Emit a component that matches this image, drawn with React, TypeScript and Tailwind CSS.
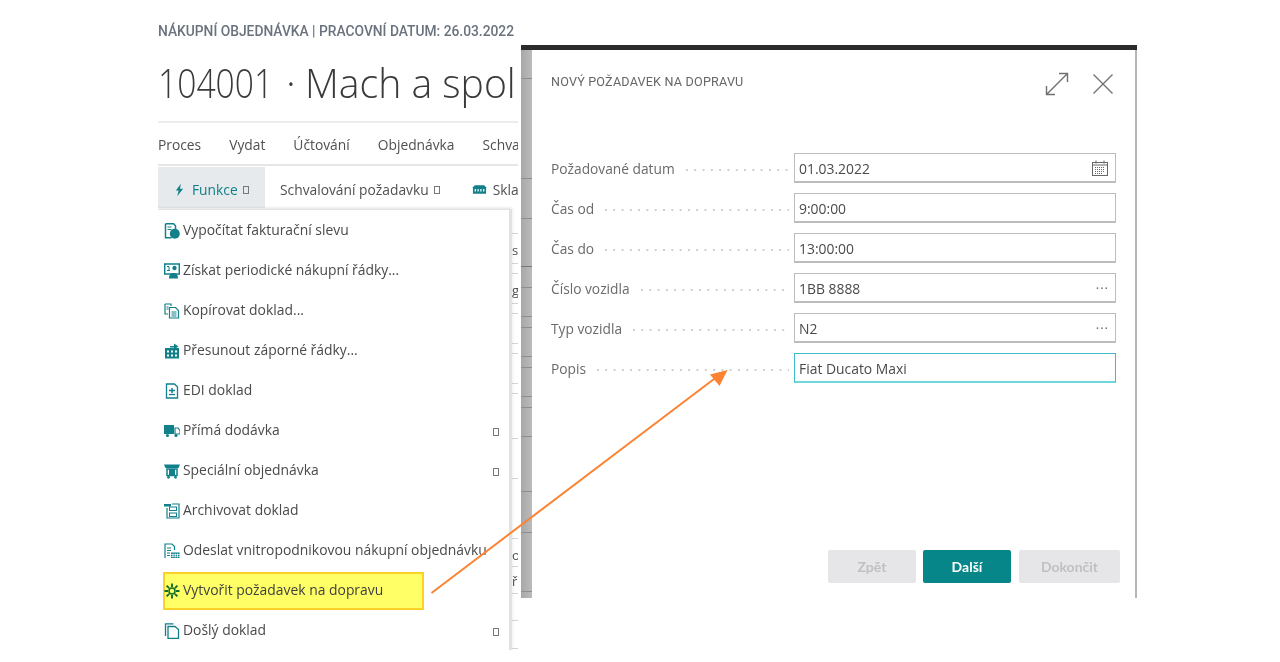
import React from "react";

const T = "#11808a";
const Sq = () => <span className="ml-[5px] inline-block h-[8px] w-[6px] shrink-0 border border-[#777]" />;

const I = ({ children }: { children: React.ReactNode }) => (
  <svg viewBox="0 0 16 16" className="h-[16px] w-[16px] shrink-0">{children}</svg>
);

const icons: Record<string, React.ReactNode> = {
  calc: <I><path d="M1.500 .8h8l2 2v5M1.500 .8v14h6" fill="none" stroke={T} strokeWidth="1.500" /><path d="M3.500 4h4M3.500 6.500h4" stroke={T} /><circle cx="10.800" cy="10.800" r="5" fill={T} /></I>,
  period: <I><rect x=".7" y="1" width="14.600" height="10" fill="none" stroke={T} strokeWidth="1.500" /><path d="M3 3.500h2v4M3 7.500h3" stroke={T} fill="none" /><circle cx="10.500" cy="5" r="2.200" fill={T} /><path d="M5 15.500c0-4 2-5.500 4.500-5.500s4.500 1.500 4.500 5.500z" fill={T} /></I>,
  copy: <I><path d="M1 1h6v2M1 1v10h3" fill="none" stroke={T} strokeWidth="1.200" /><path d="M5.500 4.500h6l3 3v7.500h-9z" fill="none" stroke={T} strokeWidth="1.200" /><path d="M7.500 9h5M7.500 11h5M7.500 13h5M2.500 4h2M2.500 6h2" stroke={T} /></I>,
  move: <I><path d="M1 5h14v10.500H1z" fill={T} /><path d="M3 7.500h2v2H3zM7 7.500h2v2H7zM11 7.500h2v2h-2zM3 11.500h2v2H3zM7 11.500h2v2H7zM11 11.500h2v2h-2z" fill="#fff" /><path d="M6 3h4V.5L14.500 3.500 10 6.500V4.500H6z" fill={T} /></I>,
  edi: <I><path d="M2.500 1h8l3 3v11h-11z" fill="none" stroke={T} strokeWidth="1.300" /><path d="M5 11.500h6" stroke={T} strokeWidth="1.300" /><path d="M5 7.500h6M8 5v5" stroke={T} strokeWidth="1.500" /></I>,
  truck: <I><rect x="0" y="2" width="10" height="9" fill={T} /><path d="M11 5h3l2 2.500V11h-5z" fill="none" stroke={T} strokeWidth="1.200" /><circle cx="3.500" cy="12.500" r="1.600" fill={T} /><circle cx="12" cy="12.500" r="1.600" fill={T} /></I>,
  special: <I><path d="M0 1.500h16l-1.500 3.500h-13z" fill={T} /><rect x="3" y="6" width="10" height="6.500" fill="none" stroke={T} strokeWidth="1.500" /><rect x="5" y="6" width="6" height="6.500" fill={T} /><circle cx="4.500" cy="14.300" r="1.400" fill={T} /><circle cx="11.500" cy="14.300" r="1.400" fill={T} /></I>,
  archive: <I><path d="M0 1h7v2.500H0z" fill={T} /><path d="M3 5v10h12V1H8" fill="none" stroke={T} strokeWidth="1.200" /><rect x="5.500" y="4" width="7" height="3.500" fill="none" stroke={T} /><rect x="5.500" y="10" width="7" height="3.500" fill="none" stroke={T} /></I>,
  send: <I><path d="M1 15V1h7l2.500 2.500V7" fill="none" stroke={T} strokeWidth="1.200" /><path d="M3 5h4M3 7.500h4M3 10h3M3 12.500h3" stroke={T} /><path d="M7 15V9.500h8.500V15z" fill={T} /><path d="M9 10.500v4M11.300 10.500v4M13.500 10.500v4" stroke="#fff" strokeWidth=".8" /><path d="M7 11.500h9M7 13.300h9" stroke="#fff" strokeWidth=".6" /></I>,
  sun: <I><circle cx="8" cy="8" r="3" fill="#ffff66" stroke="#0d6e2c" strokeWidth="1.500" /><path d="M8 .5v3.500M8 12v3.500M.5 8H4M12 8h3.500M2.600 2.600l2.500 2.500M10.900 10.900l2.500 2.500M13.400 2.600l-2.500 2.500M5.100 10.900l-2.500 2.500" stroke="#0d6e2c" strokeWidth="1.900" /></I>,
  doc: <I><path d="M1.500 13V.8h8" fill="none" stroke={T} strokeWidth="1.300" /><path d="M4 3.500h7l3.500 3V15.500H4z" fill="none" stroke={T} strokeWidth="1.300" /></I>,
};

const menu: { icon: string; label: string; sub?: boolean; hl?: boolean }[] = [
  { icon: "calc", label: "Vypočítat fakturační slevu" },
  { icon: "period", label: "Získat periodické nákupní řádky..." },
  { icon: "copy", label: "Kopírovat doklad..." },
  { icon: "move", label: "Přesunout záporné řádky..." },
  { icon: "edi", label: "EDI doklad" },
  { icon: "truck", label: "Přímá dodávka", sub: true },
  { icon: "special", label: "Speciální objednávka", sub: true },
  { icon: "archive", label: "Archivovat doklad" },
  { icon: "send", label: "Odeslat vnitropodnikovou nákupní objednávku" },
  { icon: "sun", label: "Vytvořit požadavek na dopravu", hl: true },
  { icon: "doc", label: "Došlý doklad", sub: true },
];

const leftTicks = [233, 263, 273, 303, 313, 343, 353, 383, 393, 438, 478, 538, 566, 593, 620, 648];
const stripTicks = [78, 178, 218, 266, 287, 316, 327, 356, 367, 396, 407, 436, 491, 532, 591];

const fields = [
  { label: "Požadované datum", value: "01.03.2022", end: "cal" },
  { label: "Čas od", value: "9:00:00" },
  { label: "Čas do", value: "13:00:00" },
  { label: "Číslo vozidla", value: "1BB 8888", end: "dots" },
  { label: "Typ vozidla", value: "N2", end: "dots" },
  { label: "Popis", value: "Fiat Ducato Maxi", active: true },
];

export default function App() {
  return (
    <div className="relative h-[662px] w-[1280px] overflow-hidden bg-white font-['Open_Sans',sans-serif] blur-[0.35px]">
      {/* background page */}
      <div className="absolute left-[158px] top-0 h-[650px] w-[360px] overflow-hidden">
        <div className="flex h-[62px] items-end whitespace-nowrap pb-[22px] font-['Roboto',sans-serif] text-[13.8px] font-medium leading-[18px] text-[#69727d]">
          NÁKUPNÍ OBJEDNÁVKA | PRACOVNÍ DATUM: 26.03.2022
        </div>
        <div className="flex h-[61px] items-start whitespace-nowrap border-b-2 border-[#ececec] text-[41px] font-light leading-[40px] text-[#3a3a3a]">
          <span className="inline-block w-[119px] shrink-0 origin-left scale-x-[0.82]">104001</span>
          <span className="inline-block w-[28px] shrink-0 text-center">·</span>
          <span className="inline-block shrink-0 origin-left scale-x-[0.955]">Mach a spol</span>
        </div>
        <div className="flex h-[43px] items-center gap-[28px] whitespace-nowrap border-b-2 border-[#e6e6e6] pt-[3px] text-[13.8px] text-[#505050]">
          <span>Proces</span><span>Vydat</span><span>Účtování</span><span>Objednávka</span><span>Schvalování</span>
        </div>
        <div className="mt-px flex h-[41px] items-stretch whitespace-nowrap text-[13.8px] text-[#505050]">
          <div className="flex w-[107px] shrink-0 items-center bg-[#e7eaec] pl-[17px] pt-[5px] text-[#11808a]">
            <svg viewBox="0 0 10 14" className="mr-[8px] h-[14px] w-[9px]"><path d="M6.500 0 1 7.500h3L2.500 14 9 5.500H5.500z" fill={T} /></svg>
            Funkce<Sq />
          </div>
          <div className="ml-[15px] flex shrink-0 items-center pt-[5px]">Schvalování požadavku<Sq /></div>
          <div className="ml-[32px] flex shrink-0 items-center pt-[5px]">
            <svg viewBox="0 0 16 10" className="mr-[6px] h-[10px] w-[15px] shrink-0"><path d="M1 2 3 0h10l2 2v7H1z" fill={T} /><path d="M3.500 4v2.500M6.500 4v2.500M9.500 4v2.500M12.500 4v2.500" stroke="#fff" strokeWidth="1.300" /></svg>
            Sklad
          </div>
        </div>
        {/* page rows showing past the menu */}
        <div className="absolute left-[354px] top-[242px] text-[13px] leading-[16px] text-[#505050]">s.</div>
        <div className="absolute left-[354px] top-[282px] text-[13px] leading-[16px] text-[#505050]">gg</div>
        <div className="absolute left-[354px] top-[547px] text-[13px] leading-[16px] text-[#505050]">oc</div>
        <div className="absolute left-[354px] top-[573px] text-[13px] leading-[16px] text-[#505050]">ře</div>
        {leftTicks.map((y) => (
          <div key={y} className="absolute left-[354px] h-px w-[7px] bg-[#d4d4d4]" style={{ top: y }} />
        ))}
        {/* dropdown menu */}
        <div className="absolute left-0 top-[209px] h-[441px] w-[354px] border-r-[3px] border-t border-[#e2e2e2] bg-white pt-px text-[13.9px] text-[#4a4a4a] shadow-[0_-1px_3px_rgba(0,0,0,0.12)]">
          {menu.map((m) => (
            <div key={m.label} className="flex h-[40px] items-center pl-[5px] pr-[10px]">
              <div className={"flex h-[38px] items-center gap-[3px] whitespace-nowrap " + (m.hl ? "w-[261px] border-2 border-[#fbd127] bg-[#ffff66] text-[#3f3f3f]" : "w-full pl-px")}>
                <span className={m.hl ? "-ml-px" : ""}>{icons[m.icon]}</span>
                <span className="pb-[2px]">{m.label}</span>
                {m.sub && <span className="ml-auto"><Sq /></span>}
              </div>
            </div>
          ))}
        </div>
      </div>

      {/* dialog */}
      <div className="absolute left-[521px] top-[45px] flex h-[553px] w-[616px] flex-col">
        <div className="h-[5px] bg-[#2b2b2b]" />
        <div className="flex flex-1">
          <div className="relative w-[11px] bg-gradient-to-r from-[#a8a8a8] to-[#bbbbbb]">
            {stripTicks.map((y) => (
              <div key={y} className={"absolute left-0 h-px w-full " + (y === 266 ? "bg-[#777]" : "bg-[#8f8f8f]")} style={{ top: y - 50 }} />
            ))}
          </div>
          <div className="flex flex-1 flex-col border-r-2 border-[#b5b5b5] bg-white pl-[19px] pr-[19px]">
            <div className="flex h-[103px] items-start justify-between">
              <div className="mt-[25px] whitespace-nowrap font-['Roboto',sans-serif] text-[12.6px] font-normal leading-[14px] tracking-[0.2px] text-[#666]">
                NOVÝ POŽADAVEK NA DOPRAVU
              </div>
              <div className="mr-[3px] mt-[22px] flex items-center gap-[24px]">
                <svg viewBox="0 0 24 24" className="h-[24px] w-[24px]" fill="none" stroke="#707070" strokeWidth="1.400"><path d="M1.500 22.500 22.500 1.500M14 1.500h8.500V10M1.500 14v8.500H10" /></svg>
                <svg viewBox="0 0 20 20" className="h-[20px] w-[20px]" fill="none" stroke="#707070" strokeWidth="1.300"><path d="M.5.500l19 19M19.500.500l-19 19" /></svg>
              </div>
            </div>
            <div className="flex flex-col gap-[10px]">
              {fields.map((f) => (
                <div key={f.label} className="flex h-[30px] items-center">
                  <span className="mr-[11px] whitespace-nowrap pt-[3px] text-[13.75px] text-[#6a6a6a]">{f.label}</span>
                  <span className="mr-[5px] mt-[3px] h-[2px] flex-1 bg-[linear-gradient(to_right,#cdcdcd_1.5px,transparent_1.5px)] bg-[length:8.300px_2px]" />
                  <div className={"flex h-[30px] w-[322px] shrink-0 items-center justify-between border border-b-2 bg-white pl-[4px] pr-[5px] pt-[3px] text-[13.9px] text-[#4a4a4a] " + (f.active ? "border-[#3bbcc8] border-b-[#6fd8dc]" : "border-[#bdbdbd]")}>
                    <span>{f.value}</span>
                    {f.end === "cal" && (
                      <svg viewBox="0 0 16 16" className="mb-[3px] mr-[2px] h-[16px] w-[16px]" fill="none" stroke="#666"><rect x=".5" y="2.500" width="15" height="13" /><path d="M.5 5h15M4 .5v3M12 .5v3" /><path d="M3 7.500h10M3 9.500h10M3 11.500h10M3 13.500h7" strokeDasharray="1 1" /></svg>
                    )}
                    {f.end === "dots" && <span className="mb-[1px] mr-[1px] text-[13px] leading-none tracking-[1px] text-[#666]">···</span>}
                  </div>
                </div>
              ))}
            </div>
            <div className="-mr-[4px] mt-[167px] flex items-start justify-end font-['Lato',sans-serif] text-[14px] font-bold">
              <div className="flex h-[33px] w-[88px] items-center justify-center rounded-[2px] bg-[#e6e6e8] text-[#c0c0c4]">Zpět</div>
              <div className="ml-[7px] flex h-[33px] w-[88px] items-center justify-center rounded-[2px] bg-[#07868a] text-white">Další</div>
              <div className="ml-[8px] flex h-[33px] w-[101px] items-center justify-center rounded-[2px] bg-[#e6e6e8] text-[#c0c0c4]">Dokončit</div>
            </div>
          </div>
        </div>
      </div>

      {/* annotation arrow */}
      <svg viewBox="0 0 1280 662" className="pointer-events-none absolute inset-0 h-[662px] w-[1280px]">
        <path d="M431.500 593 718 376" stroke="#fb8332" strokeWidth="2" fill="none" />
        <path d="M727.500 370 710 374.500 719.500 386z" fill="#fb8332" />
      </svg>
    </div>
  );
}
